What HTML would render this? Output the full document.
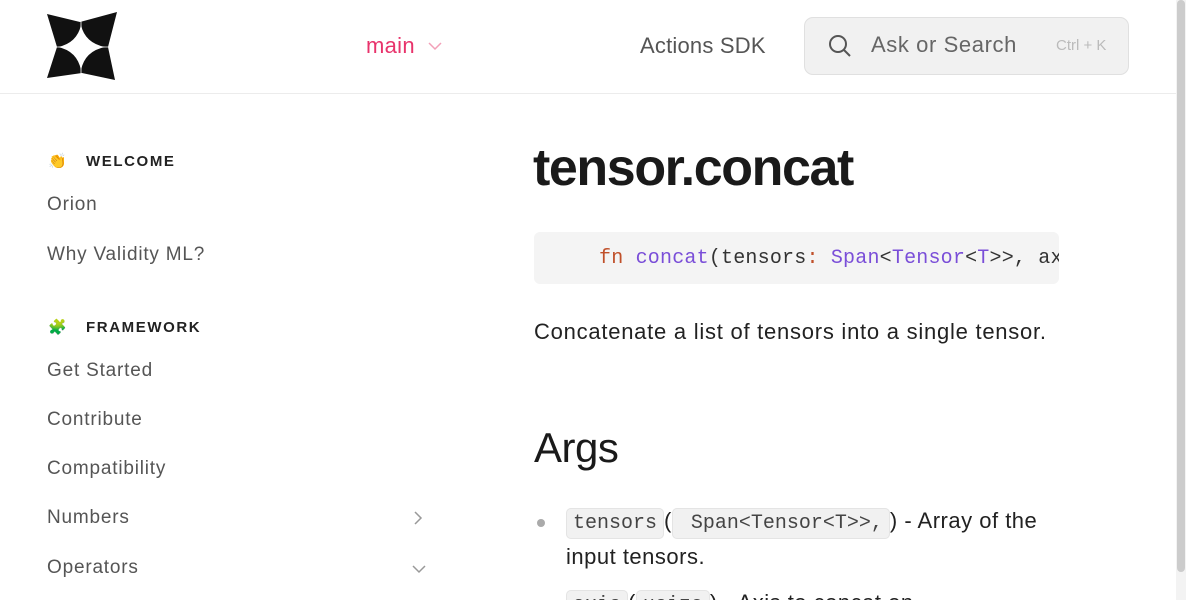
<!DOCTYPE html>
<html><head><meta charset="utf-8"><style>
*{margin:0;padding:0;box-sizing:border-box}
html,body{width:1186px;height:600px;overflow:hidden}
body{background:#fff;font-family:"Liberation Sans",sans-serif;color:#222;position:relative}
.hdr{position:absolute;left:0;top:0;width:1176px;height:94px;border-bottom:1px solid #ececec}
.abs{position:absolute;white-space:nowrap}
.side{color:#555;font-size:19px;letter-spacing:0.8px}
.sec{font-size:15px;font-weight:bold;letter-spacing:1.6px;color:#222}
.mono{font-family:"Liberation Mono",monospace}
code{font-family:"Liberation Mono",monospace;background:#f1f1f1;border:1px solid #e4e4e4;border-radius:5px;padding:3px 6px;color:#444;font-size:20px;letter-spacing:0}
</style></head><body>
<div class="hdr">
<svg class="abs" style="left:40px;top:5px" width="85" height="85" viewBox="40 5 85 85">
<path d="M47 14 L80 22 L117 12 L108 47 L115 80 L82 73 L47 78 L57 47Z" fill="#111"/>
<path d="M81 25 Q85 43 105 47 Q85 51 81 70 Q77 51 58 47 Q77 43 81 25Z" fill="#fff"/>
<path d="M81 18 V76 M52 47 H112" stroke="#fff" stroke-width="0.8"/>
</svg>
<div class="abs" style="left:366px;top:33px;font-size:22px;color:#e8336b;letter-spacing:0.3px">main</div>
<svg class="abs" style="left:428px;top:41px" width="14" height="10"><path d="M1 2 L7 8 L13 2" stroke="#f3a0b8" stroke-width="1.5" fill="none"/></svg>
<div class="abs" style="left:640px;top:33px;font-size:22px;color:#555;letter-spacing:0.2px">Actions SDK</div>
<div class="abs" style="left:804px;top:17px;width:325px;height:58px;background:#f1f1f1;border:1px solid #e0e0e0;border-radius:9px"></div>
<svg class="abs" style="left:827px;top:33px" width="26" height="26"><circle cx="11" cy="11" r="8" stroke="#555" stroke-width="2" fill="none"/><path d="M17 17 L23 23" stroke="#555" stroke-width="2"/></svg>
<div class="abs" style="left:871px;top:32px;font-size:22px;color:#666;letter-spacing:0.6px">Ask or Search</div>
<div class="abs" style="left:1056px;top:37px;font-size:15px;color:#bbb">Ctrl + K</div>
</div>
<div class="abs" style="left:1176px;top:0;width:10px;height:600px;background:#f3f3f3"></div>
<div class="abs" style="left:1177px;top:0;width:8px;height:572px;background:#ccc;border-radius:4px"></div>

<div class="abs" style="left:48px;top:152px;font-size:15px">👏</div>
<div class="abs sec" style="left:86px;top:153px">WELCOME</div>
<div class="abs side" style="left:47px;top:194px">Orion</div>
<div class="abs side" style="left:47px;top:244px">Why Validity ML?</div>
<div class="abs" style="left:48px;top:318px;font-size:15px">🧩</div>
<div class="abs sec" style="left:86px;top:319px">FRAMEWORK</div>
<div class="abs side" style="left:47px;top:360px">Get Started</div>
<div class="abs side" style="left:47px;top:409px">Contribute</div>
<div class="abs side" style="left:47px;top:458px">Compatibility</div>
<div class="abs side" style="left:47px;top:507px">Numbers</div>
<svg class="abs" style="left:412px;top:510px" width="12" height="16"><path d="M3 2 L9 8 L3 14" stroke="#999" stroke-width="1.5" fill="none"/></svg>
<div class="abs side" style="left:47px;top:557px">Operators</div>
<svg class="abs" style="left:411px;top:563px" width="16" height="12"><path d="M2 3 L8 9 L14 3" stroke="#999" stroke-width="1.5" fill="none"/></svg>

<div class="abs" style="left:533px;top:138px;font-size:52px;font-weight:bold;color:#1a1a1a;letter-spacing:-1.4px">tensor.concat</div>
<div class="abs" style="left:534px;top:232px;width:525px;height:52px;background:#f4f4f4;border-radius:6px;overflow:hidden">
<div class="abs mono" style="left:65px;top:15px;font-size:20px;color:#333;letter-spacing:0.2px"><span style="color:#c0502a">fn</span> <span style="color:#7a4ed8">concat</span>(tensors<span style="color:#c0502a">:</span> <span style="color:#7a4ed8">Span</span>&lt;<span style="color:#7a4ed8">Tensor</span>&lt;<span style="color:#7a4ed8">T</span>&gt;&gt;, axis</div>
</div>
<div class="abs" style="left:534px;top:319px;font-size:22px;color:#222;letter-spacing:0.75px">Concatenate a list of tensors into a single tensor.</div>
<div class="abs" style="left:534px;top:424px;font-size:42px;color:#1a1a1a;letter-spacing:-0.5px">Args</div>
<div class="abs" style="left:537px;top:519px;width:8px;height:8px;border-radius:50%;background:#aaa"></div>
<div class="abs" style="left:566px;top:508px;font-size:22px;color:#222;letter-spacing:0.5px"><code>tensors</code>(<code>&nbsp;Span&lt;Tensor&lt;T&gt;&gt;,</code>) - Array of the</div>
<div class="abs" style="left:566px;top:544px;font-size:22px;color:#222;letter-spacing:0.5px">input tensors.</div>
<div class="abs" style="left:566px;top:590px;font-size:22px;color:#222;letter-spacing:0.5px"><code>axis</code>(<code>usize</code>) - Axis to concat on</div>
</body></html>
